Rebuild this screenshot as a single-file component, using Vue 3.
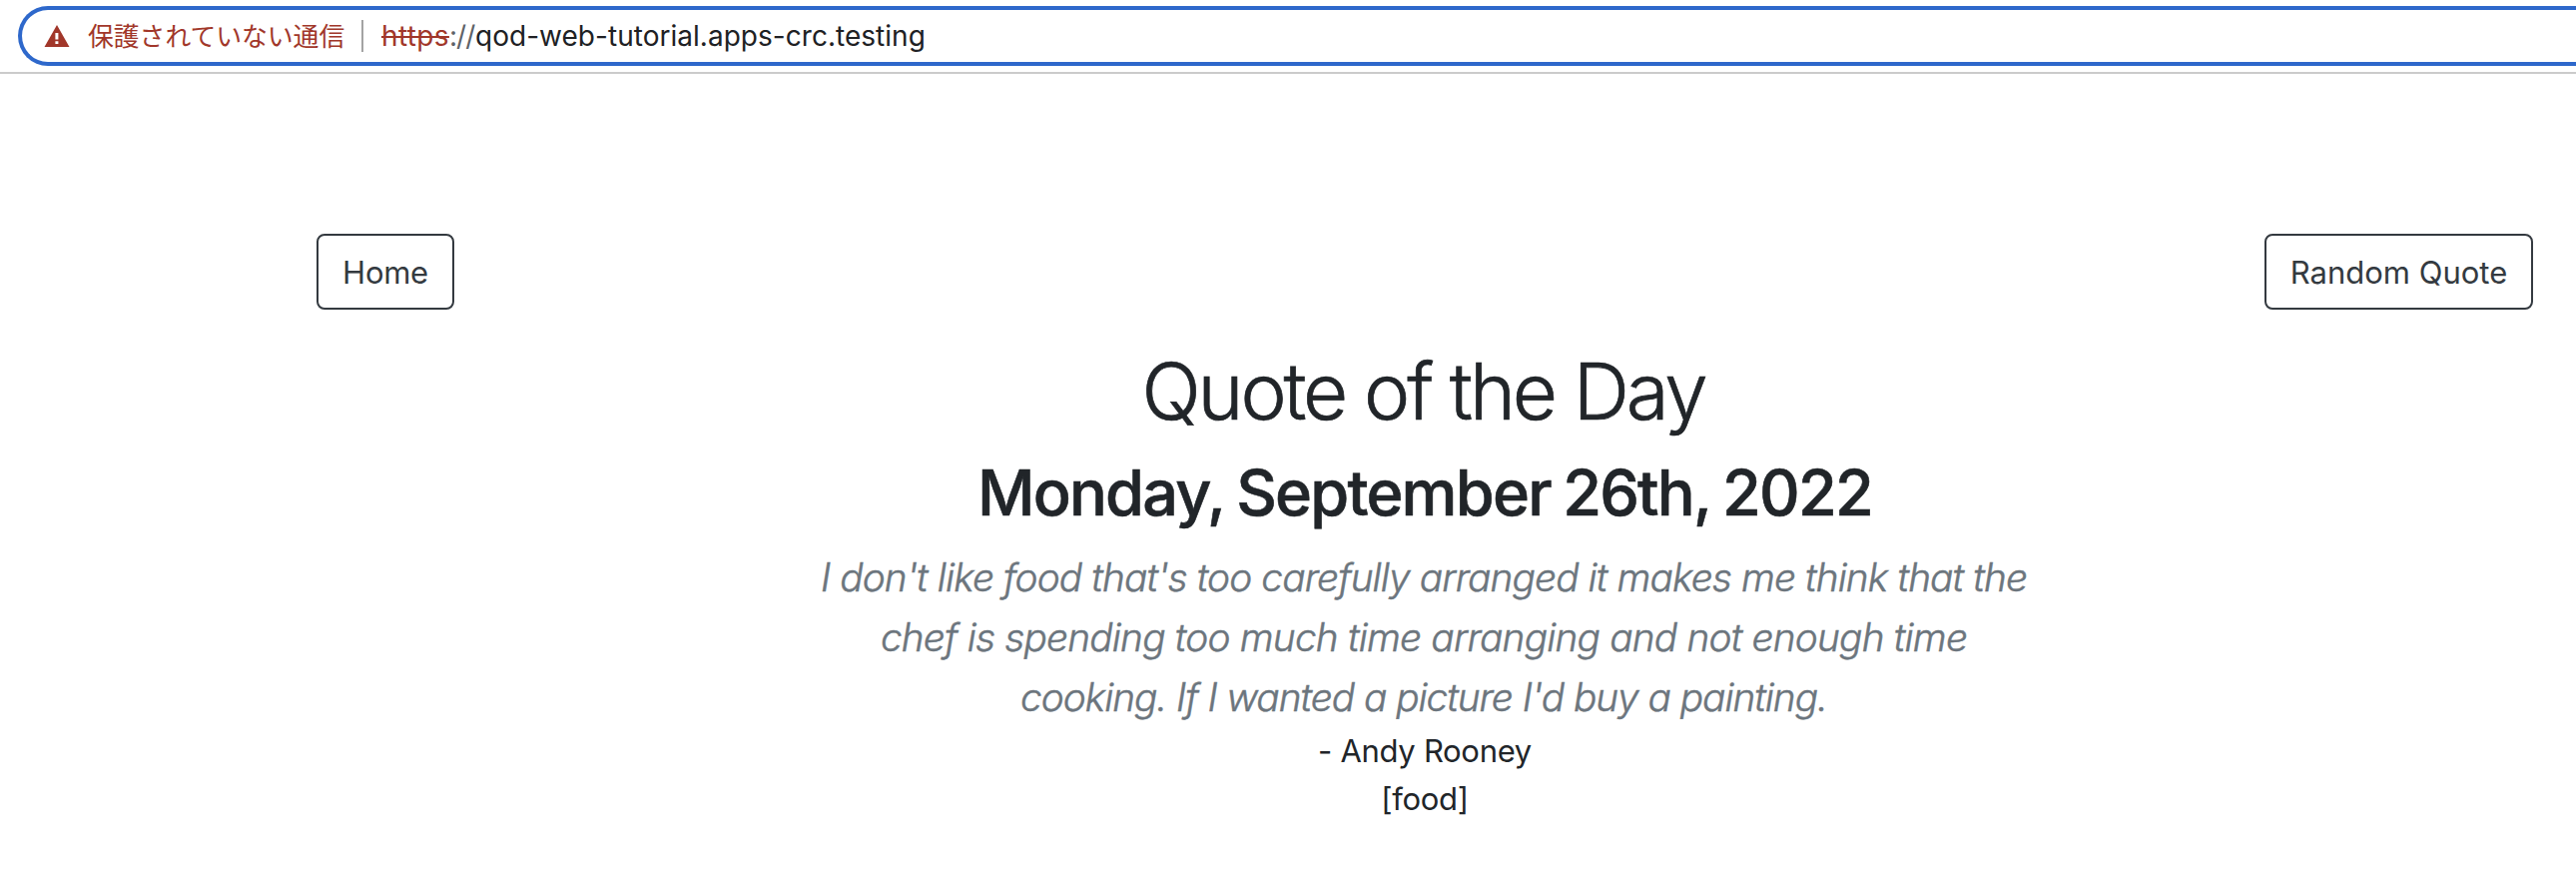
<script setup>
const quoteLines = [
  { text: "I don't like food that's too carefully arranged it makes me think that the", spacing: -0.9 },
  { text: 'chef is spending too much time arranging and not enough time', spacing: -0.81 },
  { text: "cooking. If I wanted a picture I'd buy a painting.", spacing: -1.04 },
]
</script>

<template>
  <div class="window">
    <header class="toolbar">
      <div class="omnibox">
        <svg class="warning" viewBox="0 0 26 22" aria-hidden="true">
          <path fill="#a1372a" fill-rule="evenodd" d="M13 0 25.5 22H.5ZM11.4 8v6.6h3V8Zm0 8.2V19h3v-2.8Z" />
        </svg>
        <span class="insecure">保護されていない通信</span>
        <span class="divider"></span>
        <span class="url"><span class="scheme">https</span><span class="slashes">://</span><span class="host">qod-web-tutorial.apps-crc.testing</span></span>
      </div>
    </header>

    <main class="page">
      <nav class="actions">
        <button class="btn home">Home</button>
        <button class="btn random">Random Quote</button>
      </nav>
      <h1 class="title">Quote of the Day</h1>
      <h2 class="date">Monday, September 26th, 2022</h2>
      <p class="quote">
        <span v-for="line in quoteLines" :key="line.text" class="line" :style="{ letterSpacing: line.spacing + 'px' }">{{ line.text }}</span>
      </p>
      <div class="author">- Andy Rooney</div>
      <div class="tag">[food]</div>
    </main>
  </div>
</template>

<style>
body {
  background: #fff;
}
</style>

<style scoped>
.window {
  width: 2580px;
  height: 892px;
  overflow: hidden;
  font-family: Inter, "Noto Sans CJK JP", sans-serif;
  color: #212529;
  background: #fff;
}
.toolbar {
  box-sizing: border-box;
  height: 74px;
  padding: 6px 0 0 18px;
  border-bottom: 2px solid #cbcbcb;
}
.omnibox {
  box-sizing: border-box;
  display: flex;
  align-items: center;
  height: 60px;
  padding-left: 22px;
  border: 4px solid #2e68cb;
  border-right: 0;
  border-radius: 30px 0 0 30px;
  white-space: nowrap;
}
.warning {
  width: 26px;
  height: 22px;
}
.insecure {
  width: 258px;
  margin-left: 18px;
  padding-bottom: 2px;
  font-family: "Noto Sans CJK JP", sans-serif;
  font-size: 25.8px;
  line-height: 36px;
  color: #a1372a;
}
.divider {
  width: 2px;
  height: 32px;
  margin-left: 16px;
  background: #a3a3a3;
}
.url {
  display: flex;
  margin-left: 18px;
  font-size: 28px;
  line-height: 40px;
}
.scheme {
  width: 68px;
  letter-spacing: 0.36px;
  color: #a1372a;
  text-decoration: line-through;
  text-decoration-thickness: 2px;
}
.slashes {
  width: 26px;
  letter-spacing: -1px;
  color: #5f6368;
}
.host {
  letter-spacing: 0.03px;
  color: #202124;
}
.page {
  padding: 160px 43px 0 317px;
  text-align: center;
}
.actions {
  display: flex;
  justify-content: space-between;
}
.btn {
  box-sizing: border-box;
  height: 76px;
  padding: 1px 0 0;
  border: 2px solid #343a40;
  border-radius: 8px;
  background: #fff;
  font: 400 31px/48px Inter, sans-serif;
  color: #343a40;
}
.home {
  width: 138px;
  letter-spacing: -0.27px;
}
.random {
  width: 269px;
}
.title {
  margin: 34px 0 0;
  padding-right: 3px;
  font-size: 78px;
  font-weight: 300;
  line-height: 96px;
  letter-spacing: -3.1px;
  -webkit-text-stroke: 0.7px currentColor;
}
.date {
  margin: 15px 0 0;
  font-size: 63px;
  font-weight: 500;
  line-height: 77px;
  letter-spacing: -1.8px;
  word-spacing: -2.5px;
  -webkit-text-stroke: 0.6px currentColor;
}
.quote {
  margin: 16px 0 0;
  padding-right: 2px;
  font-size: 38.8px;
  font-style: italic;
  font-weight: 300;
  line-height: 60px;
  color: #6c757d;
  -webkit-text-stroke: 0.5px currentColor;
}
.line {
  display: block;
}
.author,
.tag {
  font-size: 31px;
  line-height: 48px;
  letter-spacing: -0.3px;
}
</style>
